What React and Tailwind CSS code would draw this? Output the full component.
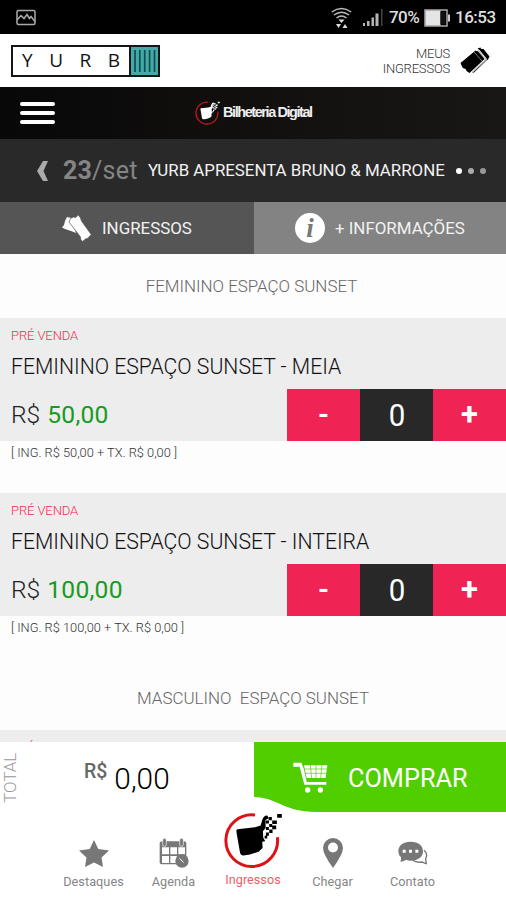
import React, { useState } from 'react';

const StatusBar = () => (
    <div className="h-[34px] bg-black flex items-center justify-between pl-4 pr-[9px] text-[#dedede]">
        <svg width="20" height="17" viewBox="0 0 20 17" fill="none" stroke="#aaa" strokeWidth="1.5">
            <rect x="1" y="1.5" width="18" height="14" rx="1.5" />
            <path d="M1 11 5 6.500l3 3L11 5.500l2.500 4 1.500-2 4 5" />
        </svg>
        <div className="flex items-center pt-px">
            <svg className="mr-[11px]" width="21" height="22" viewBox="0 0 21 22" fill="none" stroke="#bbb" strokeWidth="1.500">
                <path d="M.8 5q9.700-7 19.400 0M3 8q7.500-5.500 15 0M5.500 11q5-4 10 0" />
                <path d="M7.500 12.500h6l-3 3.500zM5 17h5l-2.500 4zM11.500 21h5l-2.500-4z" fill="#ddd" stroke="none" />
            </svg>
            <svg className="mr-[6px]" width="20" height="18" viewBox="0 0 20 18">
                <path d="M0 14h2v3H0zM4 12h2.500v5H4zM8.500 8.500h2.500v8.500H8.500zM12.500 4.500h3v12.500h-3z" fill="#b5b5b5" />
                <path d="M18 0h1.500v17H18z" fill="#444" />
            </svg>
            <span className="w-[31px] text-[17px] leading-none tracking-[-0.55px] font-medium whitespace-nowrap">70%</span>
            <svg className="ml-[4px] mr-[4px]" width="27" height="18" viewBox="0 0 27 18">
                <rect x="1" y="1" width="22" height="16" fill="none" stroke="#aaa" strokeWidth="1.500" />
                <path d="M1.500 1.500h15v15h-15z" fill="#e5e5e5" />
                <path d="M16.500 3h5v12h-5z" fill="#111" />
                <path d="M24 5.500h2v7h-2z" fill="#ccc" />
            </svg>
            <span className="w-[42px] text-[17px] leading-none tracking-[-0.5px] font-medium whitespace-nowrap">16:53</span>
        </div>
    </div>
);

const BrandMark = ({ color, ring, className }) => (
    <svg className={className} viewBox="70 54 178 166">
        <path d="M165 60A78 78 0 1 0 232.500 127" fill="none" stroke={ring} strokeWidth="9" />
        <path
            d="M112 103l53-6 17-5 5-18q6-14 16-12l3 8-9 5v24l-8 10 1 20 6 10-9 2 1 19-12 11-26 8-20 3q-8 1-10-7l-11-64q-1-7 3-8z"
            fill={color}
        />
        <path
            d="M206 66h10v10h-10zM198 77h9v9h-9zM217 77h14v10h-14zM208 87h9v9h-9zM198 96h9v9h-9zM217 92h12v11h-12zM208 104h10v10h-10zM198 113h9v10h-9zM194 123h8v8h-8zM232 57h14v11h-14z"
            fill={color}
        />
    </svg>
);

const Header = () => (
    <header className="h-[53px] bg-white flex items-center justify-between pl-[11px] pr-4">
        <div className="w-[149px] h-[32px] border-2 border-[#151515] flex items-stretch">
            <div className="flex-1 flex items-center justify-between pl-[9px] pr-[9px] text-[19px] leading-none text-[#111] font-['Open_Sans',sans-serif]">
                <span>Y</span><span>U</span><span>R</span><span>B</span>
            </div>
            <svg className="w-[29px] h-full border-l-2 border-[#151515] bg-[#43aaa9]" viewBox="0 0 27 28">
                <path d="M4 3v22M8.800 3v22M13.700 3v22M18.600 3v22M23.500 3v22" stroke="#124c4d" strokeWidth="1.700" />
            </svg>
        </div>
        <div className="flex items-center">
            <div className="text-right text-[13px] leading-[15px] text-[#333] tracking-[-0.2px] font-light">
                MEUS<br />INGRESSOS
            </div>
            <svg className="ml-[10px]" width="30" height="27" viewBox="0 0 30 27">
                <path d="M.5 16 15.500 3.500q1.500 1.500 3 0l6 8.500-15 14-3-2q0-2-2-2.500-2 0-2.500-2z" fill="#000" />
                <path d="M17.500 1.500 20.500.5q0 2 3 1.500l6 7.500-1.500 3-1.500 1L14 25.500l-2 .5 15-14-7.500-9z" fill="#000" />
                <path d="m14 5 8 9" fill="none" stroke="#777" />
                <path d="m18 3.500 8 9L12 25.500" fill="none" stroke="#bbb" strokeWidth="1.300" />
            </svg>
        </div>
    </header>
);

const BrandBar = () => (
    <div className="h-[52px] bg-gradient-to-r from-[#080808] via-[#12100f] to-[#191715] flex items-center pl-[20px]">
        <div className="w-[35px] flex flex-col gap-[5px]">
            <i className="h-[4px] rounded-full bg-white" />
            <i className="h-[4px] rounded-full bg-white" />
            <i className="h-[4px] rounded-full bg-white" />
        </div>
        <BrandMark color="#fff" ring="#c3161e" className="ml-[140px] w-[25px] h-[24px]" />
        <span className="ml-[3px] text-[14.500px] text-[#eee] font-bold tracking-[-1.430px] whitespace-nowrap font-['Liberation_Sans',sans-serif]">
            Bilheteria Digital
        </span>
    </div>
);

const EventBar = () => (
    <div className="h-[63px] bg-[#292929] flex items-center pl-[37px] whitespace-nowrap">
        <svg width="12" height="20" viewBox="0 0 12 20">
            <path d="M6 0h5L6.500 10l4.500 10H6L0 10z" fill="#aaa" />
        </svg>
        <span className="ml-[14px] w-[85px] text-[25px] leading-none text-[#858585] tracking-[0.2px]">
            <b>23</b>/set
        </span>
        <span className="w-[298px] text-[16.850px] leading-none text-[#f2f2f2]">YURB APRESENTA BRUNO &amp; MARRONE</span>
        <div className="ml-[10px] flex gap-[6px]">
            <i className="size-[6px] rounded-full bg-white" />
            <i className="size-[6px] rounded-full bg-[#aaa]" />
            <i className="size-[6px] rounded-full bg-[#999]" />
        </div>
    </div>
);

const Tabs = () => (
    <div className="h-[52px] flex text-[16.900px] leading-none text-[#f2f2f2] whitespace-nowrap">
        <div className="w-[254px] bg-[#555] flex items-center pl-[62px]">
            <svg width="30" height="27" viewBox="0 0 30 27" fill="#fff">
                <path d="M0 12.500 2 10l1-4 2-4 4 1 5 15-5-2-3-1-3-1z" />
                <path d="m8.500 3.500 3-1.500 2 .5L16.500 0l2 3 1 3 10 14-2 1-1 2-3 1-3 2.500-2-2.500v-2L7 7z" stroke="#555" strokeWidth=".7" />
            </svg>
            <span className="ml-[10px] pt-px">INGRESSOS</span>
        </div>
        <div className="flex-1 bg-[#838383] flex items-center pl-[41px]">
            <span className="size-[30px] rounded-full bg-white text-[#777] flex items-center justify-center font-['Liberation_Serif',serif] italic font-bold text-[27px]">
                i
            </span>
            <span className="ml-[10px] pt-px">+ INFORMAÇÕES</span>
        </div>
    </div>
);

const Tag = () => (
    <div className="pl-[11px] pt-[10px] text-[13px] leading-[15px] text-[#ee2f53] tracking-[-0.1px] font-light">PRÉ VENDA</div>
);

const Ticket = ({ name, price, note }) => {
    const [amount, setAmount] = useState(0);

    return (
        <section className="h-[175px] shrink-0 whitespace-nowrap">
            <div className="h-[123px] bg-[#ededed] flex flex-col">
                <Tag />
                <div className="pl-[11px] pt-[12px] text-[21.200px] leading-[24px] text-[#111] font-light">{name}</div>
                <div className="mt-auto h-[52px] flex justify-between">
                    <div className="pl-[11px] flex items-center gap-[7px] text-[24.600px] text-[#222]">
                        <span className="font-light">R$</span>
                        <span className="text-[#179b22] tracking-[0.25px]">{price}</span>
                    </div>
                    <div className="w-[219px] grid grid-cols-3 text-white">
                        <button className="bg-[#f02454] text-[28px] font-bold" onClick={() => setAmount(Math.max(0, amount - 1))}>-</button>
                        <span className="bg-[#282828] flex items-center justify-center text-[32px]">
                            <span className="scale-x-[.92]">{amount}</span>
                        </span>
                        <button className="bg-[#f02454] text-[31px] font-bold" onClick={() => setAmount(amount + 1)}>+</button>
                    </div>
                </div>
            </div>
            <div className="pl-[11px] pt-[4px] text-[12.800px] leading-[15px] text-[#333] font-light">{note}</div>
        </section>
    );
};

const TotalBar = () => (
    <div className="h-[70px] flex whitespace-nowrap">
        <div className="w-[254px] bg-white flex items-center">
            <span className="w-[20px] h-[49px] mt-[3px] [writing-mode:vertical-rl] rotate-180 text-[17px] leading-[20px] text-[#999] font-light">TOTAL</span>
            <span className="ml-[64px] mb-[10px] text-[19.500px] leading-none font-medium text-[#666]">R$</span>
            <span className="ml-[7px] pt-[3px] text-[29.800px] leading-none text-[#000] font-light">0,00</span>
        </div>
        <button className="relative flex-1 bg-[#50ce00] flex items-center pl-[39px] text-white">
            <svg width="35" height="31" viewBox="118 98 103 93">
                <path d="M118 100h24l7 17 9 41h59v8h-66l-14-54h-19z" fill="#fff" />
                <path d="M150 108h70l-5 38h-57z" fill="#fff" />
                <path d="M150 119h70M153 132h66M169 106l4 42M186 106v42M204 106l-4 42" stroke="#50ce00" strokeWidth="2" />
                <circle cx="161" cy="182" r="8" fill="#fff" />
                <circle cx="199" cy="182" r="8" fill="#fff" />
            </svg>
            <span className="ml-[20px] pt-[3px] text-[25.300px] leading-none">COMPRAR</span>
            {/* white hump the centre nav item rises into */}
            <svg className="absolute left-0 bottom-0" width="62" height="16" viewBox="0 0 62 16">
                <path d="M0 1C22 1 30 16 62 16H0z" fill="#fff" />
            </svg>
        </button>
    </div>
);

const StarIcon = () => (
    <svg width="30" height="29" viewBox="0 0 30 29">
        <path d="m15 1 4.300 9 10.700 1.500-7.500 7L24 28l-9-4.600L6 28l1.500-9.500L0 11.500 10.700 10z" fill="#777" />
    </svg>
);

const CalendarIcon = () => (
    <svg width="30" height="30" viewBox="476 325 90 90">
        <path d="M478 340q0-5 8-5h64q8 0 8 5v64h-74q-6 0-6-6z" fill="#777" />
        <path d="M485 353h21v21h-21zM510 353h20v21h-20zM534 353h20v21h-20zM485 379h21v21h-21zM510 379h20v21h-20z" fill="#fff" />
        <rect x="487" y="326" width="11" height="24" rx="5" fill="#777" stroke="#fff" strokeWidth="2" />
        <rect x="538" y="326" width="11" height="24" rx="5" fill="#777" stroke="#fff" strokeWidth="2" />
        <circle cx="545" cy="394" r="20" fill="#777" />
        <path d="m537 386 13 12" fill="none" stroke="#fff" strokeWidth="3" />
    </svg>
);

const PinIcon = () => (
    <svg width="20" height="30" viewBox="0 0 20 30">
        <path fillRule="evenodd" d="M10 0a10 10 0 0 1 10 10q0 6-10 20Q0 16 0 10A10 10 0 0 1 10 0zm0 4.500a5 5 0 1 0 0 10 5 5 0 0 0 0-10z" fill="#777" />
    </svg>
);

const ChatIcon = () => (
    <svg width="30" height="24" viewBox="436 334 90 72">
        <path d="M514 362q12 9 6 22l-1 4 2 14q-8-2-12-5-19 3-28-5" fill="none" stroke="#777" strokeWidth="4" />
        <path d="M474 336c23 0 37 12 37 29s-14 28-37 28q-8 0-14-3-7 6-17 6 4-6 2-13-8-7-8-18c0-17 14-29 37-29z" fill="#777" />
        <path d="M450 360h9v9h-9zM469 360h9v9h-9zM488 360h9v9h-9z" fill="#fff" />
    </svg>
);

const NavItem = ({ icon, label }) => (
    <div className="w-[80px] flex flex-col items-center">
        <div className="h-[30px] mt-[26px] flex items-center">{icon}</div>
        <span className="mt-[6px] text-[12.700px] leading-[16px] text-[#858585] tracking-[0.05px]">{label}</span>
    </div>
);

const BottomNav = () => (
    <nav className="h-[88px] bg-white flex justify-center">
        <NavItem icon={<StarIcon />} label="Destaques" />
        <NavItem icon={<CalendarIcon />} label="Agenda" />
        <div className="w-[79px] flex flex-col items-center">
            <BrandMark color="#000" ring="#df1116" className="mt-px w-[60px] h-[55px]" />
            <span className="mt-[4px] text-[12.700px] leading-[16px] text-[#ed5f66]">Ingressos</span>
        </div>
        <NavItem icon={<PinIcon />} label="Chegar" />
        <NavItem icon={<ChatIcon />} label="Contato" />
    </nav>
);

const App = () => (
    <div className="w-[506px] h-[900px] overflow-hidden bg-white flex flex-col font-[Roboto,sans-serif]">
        <StatusBar />
        <Header />
        <BrandBar />
        <EventBar />
        <Tabs />
        <main className="h-[488px] bg-[#fdfdfd] overflow-hidden flex flex-col">
            <h2 className="h-[64px] pt-px pr-[3px] shrink-0 flex items-center justify-center text-[16.950px] text-[#666] font-light">FEMININO ESPAÇO SUNSET</h2>
            <Ticket name="FEMININO ESPAÇO SUNSET - MEIA" price="50,00" note="[ ING. R$ 50,00 + TX. R$ 0,00 ]" />
            <Ticket name="FEMININO ESPAÇO SUNSET - INTEIRA" price="100,00" note="[ ING. R$ 100,00 + TX. R$ 0,00 ]" />
            <h2 className="h-[62px] shrink-0 flex items-center justify-center text-[16.950px] text-[#666] font-light whitespace-pre">MASCULINO  ESPAÇO SUNSET</h2>
            <div className="h-[12px] shrink-0 bg-[#ededed] overflow-hidden">
                <Tag />
            </div>
        </main>
        <TotalBar />
        <BottomNav />
    </div>
);

export default App;
